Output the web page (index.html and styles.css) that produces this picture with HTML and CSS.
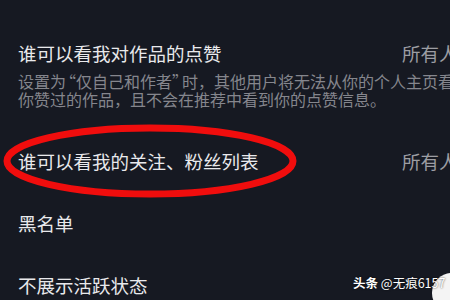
FILE: index.html
```html
<!DOCTYPE html>
<html lang="zh-CN">
<head>
<meta charset="utf-8">
<link rel="stylesheet" href="styles.css">
</head>
<body>
<div class="screen">
  <div class="list">
    <div class="item first">
      <div class="row">
        <span class="title">谁可以看我对作品的点赞</span>
        <span class="value">所有人</span>
      </div>
      <p class="desc">设置为<span class="ql">“</span>仅自己和作者<span class="qr">”</span>时，其他用户将无法从你的个人主页看<br>你赞过的作品，且不会在推荐中看到你的点赞信息。</p>
    </div>
    <div class="row item">
      <span class="title">谁可以看我的关注、粉丝列表</span>
      <span class="value">所有人</span>
    </div>
    <div class="row item">
      <span class="title">黑名单</span>
    </div>
    <div class="row item">
      <span class="title">不展示活跃状态</span>
    </div>
  </div>
  <svg class="circle-mark" width="300" height="80" viewBox="0 0 300 80">
    <ellipse cx="150" cy="37" rx="143" ry="33" fill="none" stroke="#f00d0d" stroke-width="7"/>
  </svg>
  <div class="dot"></div>
  <div class="watermark"><b>头条</b> @无痕6157</div>
</div>
</body>
</html>
```
FILE: styles.css
```css
html, body {
  margin: 0;
  padding: 0;
  background: #161922;
  overflow: hidden;
}
.screen {
  position: relative;
  width: 450px;
  height: 300px;
  overflow: hidden;
  font-family: "Noto Sans CJK SC", "Noto Sans", sans-serif;
  color: #e9e9ec;
}
.list {
  width: 438px;
  padding: 41px 0 0 18px;
  display: flex;
  flex-direction: column;
}
.row {
  display: flex;
  align-items: center;
  justify-content: space-between;
}
.title {
  font-size: 18.5px;
  line-height: 24px;
  white-space: nowrap;
}
.value {
  font-size: 18.5px;
  line-height: 24px;
  color: #9c9da3;
  white-space: nowrap;
  width: 54px;
}
.first {
  padding-bottom: 22px;
}
.desc {
  margin: 7px 0 0;
  font-size: 16px;
  line-height: 18px;
  color: #85868d;
  white-space: nowrap;
}
.ql {
  margin-left: -6px;
}
.qr {
  letter-spacing: -6px;
}
.item.row {
  height: 62px;
}
.circle-mark {
  position: absolute;
  left: 0;
  top: 124px;
}
.dot {
  position: absolute;
  left: 432px;
  top: 273px;
  width: 40px;
  height: 40px;
  border-radius: 50%;
  background: #f4f4f4;
}
.watermark {
  position: absolute;
  left: 353px;
  top: 275px;
  font-size: 12.5px;
  line-height: 16px;
  color: #ffffff;
  white-space: nowrap;
  text-shadow: 0 0 2px rgba(0,0,0,0.8);
  font-family: "Noto Sans CJK SC", "Noto Sans", sans-serif;
}
.watermark b {
  font-weight: 700;
}
```
